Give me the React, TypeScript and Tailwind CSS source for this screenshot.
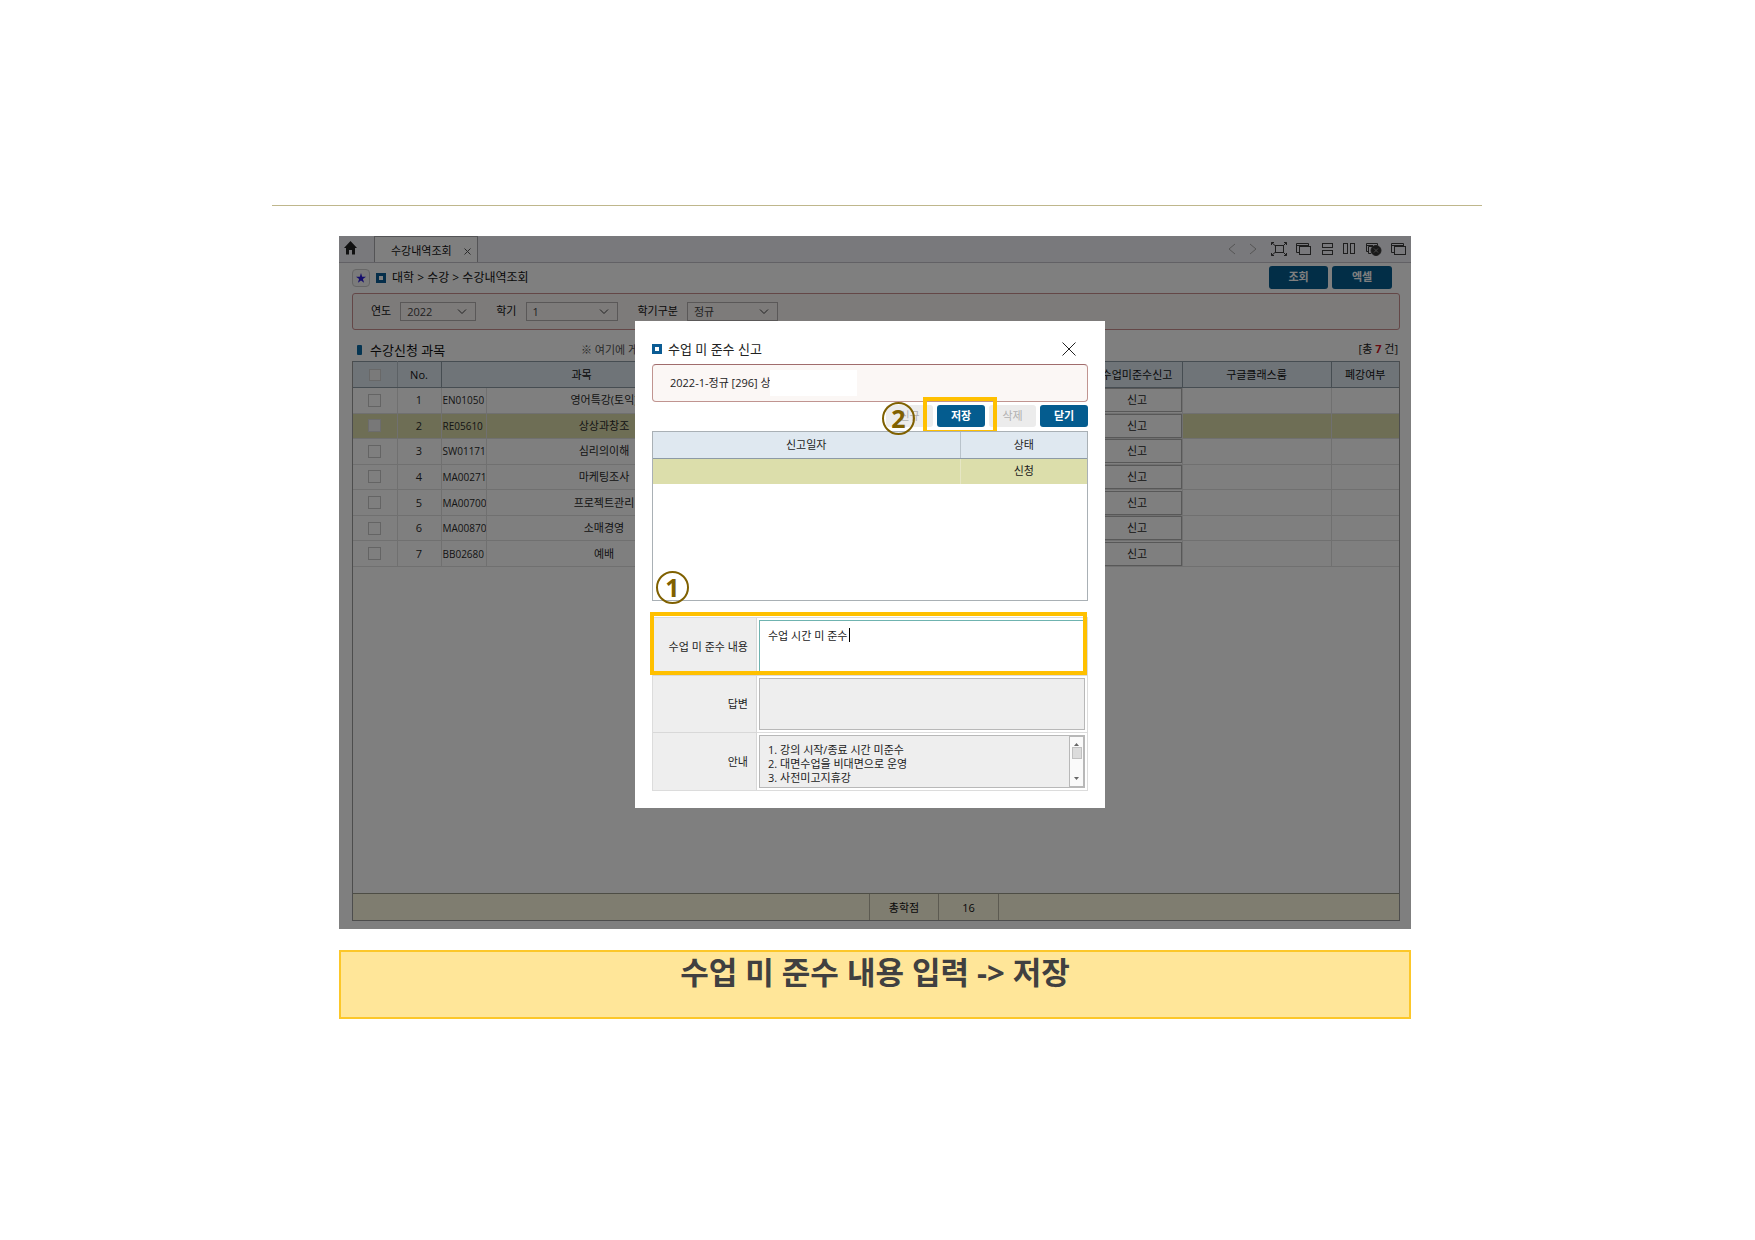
import React, { useState } from 'react';

interface Course {
    no: number;
    code: string;
    name: string;
}

const courses: Course[] = [
    { no: 1, code: 'EN01050', name: '영어특강(토익)' },
    { no: 2, code: 'RE05610', name: '상상과창조' },
    { no: 3, code: 'SW01171', name: '심리의이해' },
    { no: 4, code: 'MA00271', name: '마케팅조사' },
    { no: 5, code: 'MA00700', name: '프로젝트관리' },
    { no: 6, code: 'MA00870', name: '소매경영' },
    { no: 7, code: 'BB02680', name: '예배' },
];

const SquareMark: React.FC = () => (
    <span className="flex size-[10px] shrink-0 items-center justify-center bg-[#0b5c94]">
        <span className="size-1 bg-white" />
    </span>
);

interface FilterSelectProps {
    id: string;
    label: string;
    value: string;
    width: string; // Tailwind width class
}

const FilterSelect: React.FC<FilterSelectProps> = ({ id, label, value, width }) => (
    <div className="flex items-center gap-[9px]">
        <label htmlFor={id} className="text-[11px] text-[#111]">{label}</label>
        <div className={`relative ${width}`}>
            <select
                id={id}
                defaultValue={value}
                className="block h-[19px] w-full appearance-none border border-[#b4b0b0] bg-[#faf6f5] pl-[6px] text-[11px] leading-[17px] text-[#444]"
            >
                <option>{value}</option>
            </select>
            <svg
                className="pointer-events-none absolute right-[9px] top-[6px]"
                width="10"
                height="7"
                viewBox="0 0 10 7"
                fill="none"
                stroke="#444"
            >
                <path d="M1 1.5L5 5.5L9 1.5" />
            </svg>
        </div>
    </div>
);

const ToolbarIcons: React.FC = () => (
    <div className="flex items-center gap-[9px] pr-1 text-[#3c3c3c]">
        <svg width="10" height="14" viewBox="0 0 10 14" fill="none" stroke="#aaa"><path d="M7 2L1 7L7 12" /></svg>
        <svg className="mr-[3px]" width="12" height="14" viewBox="0 0 12 14" fill="none" stroke="#aaa"><path d="M3 2L9 7L3 12" /></svg>
        {/* Full screen */}
        <svg width="16" height="14" viewBox="0 0 16 14" fill="none" stroke="currentColor">
            <rect x="4.5" y="3.5" width="8" height="7" />
            <path d="M.5 3V.5H3M13 .5H15.5V3M15.5 11V13.5H13M3 13.5H.5V11M.5 .5L4 3.500M15.5 .5L12.500 3.500M.5 13.5L4 10.500M15.5 13.5L12.500 10.500" />
        </svg>
        {/* Cascade */}
        <svg width="16" height="14" viewBox="0 0 16 14" fill="none" stroke="currentColor">
            <path d="M3 10.5H.5V1.5H12.5V4M.5 3.5H12.5" />
            <rect x="3.5" y="4.5" width="11" height="8" />
        </svg>
        <svg width="13" height="14" viewBox="0 0 13 14" fill="none" stroke="currentColor">
            <rect x="1.5" y="1.5" width="10" height="4" />
            <rect x="1.5" y="8.5" width="10" height="4" />
        </svg>
        <svg width="13" height="14" viewBox="0 0 13 14" fill="none" stroke="currentColor">
            <rect x=".5" y="1.5" width="4" height="10" />
            <rect x="7.5" y="1.5" width="4" height="10" />
        </svg>
        {/* Close all */}
        <svg width="17" height="14" viewBox="0 0 17 14" fill="none" stroke="currentColor">
            <path d="M3.5 9.5H1.5V1.5H12.5V3.5M1.5 3.5H8M6 11.5H3.5V4.5H9" />
            <circle cx="11" cy="8.5" r="5" fill="#333" />
            <path d="M9 6.5L13 10.5M13 6.5L9 10.5" stroke="#999" />
        </svg>
        <svg width="16" height="14" viewBox="0 0 16 14" fill="none" stroke="currentColor">
            <path d="M3 10.5H.5V1.5H12.5V4M.5 3.5H12.5" />
            <rect x="3.5" y="4.5" width="11" height="8" />
        </svg>
    </div>
);

const CourseTable: React.FC = () => (
    <table className="h-[206px] w-full table-fixed border-collapse text-center text-[11px] leading-[14px] text-[#2a2a2a]">
        <colgroup>
            <col className="w-[44px]" />
            <col className="w-[44px]" />
            <col className="w-[45px]" />
            <col className="w-[236px]" />
            <col />
            <col className="w-[90px]" />
            <col className="w-[149px]" />
            <col className="w-[68px]" />
        </colgroup>
        <thead>
            <tr className="h-[26px] bg-[#dee8f1] text-[#111]">
                <th className="border border-[#8d9aa5] border-l-0 border-r-[#b9c3cb] p-0">
                    <input
                        type="checkbox"
                        aria-label="전체 선택"
                        className="mx-auto block size-[12px] appearance-none border border-[#d0d0d0] bg-[#f4f4f4]"
                    />
                </th>
                <th className="border border-[#8d9aa5] p-0 font-medium">No.</th>
                <th colSpan={2} className="border border-[#8d9aa5] p-0 font-normal">과목</th>
                <th className="border border-[#8d9aa5] p-0" />
                <th className="border border-[#8d9aa5] p-0 font-normal">수업미준수신고</th>
                <th className="border border-[#8d9aa5] p-0 font-normal">구글클래스룸</th>
                <th className="border border-r-0 border-[#8d9aa5] p-0 font-normal">폐강여부</th>
            </tr>
        </thead>
        <tbody>
            {courses.map((course) => (
                <tr key={course.no} className={`h-[25px] ${course.no === 2 ? 'bg-[#dcddab]' : 'bg-white'}`}>
                    <td className="border border-l-0 border-[#e0e0e0] p-0">
                        <input
                            type="checkbox"
                            aria-label={course.name}
                            className={`mx-auto block size-[13px] appearance-none border ${
                                course.no === 2 ? 'border-[#d8d8d8] bg-[#f0f0f0]' : 'border-[#c8c8c8] bg-white'
                            }`}
                        />
                    </td>
                    <td className="border border-[#e0e0e0] p-0">{course.no}</td>
                    <td className="overflow-hidden whitespace-nowrap border border-[#e0e0e0] p-0 pl-px text-left text-[10px]">
                        {course.code}
                    </td>
                    <td className="border border-[#e0e0e0] p-0">{course.name}</td>
                    <td className="border border-[#e0e0e0] p-0" />
                    <td className="border border-[#e0e0e0] p-0">
                        <button className="block h-[24px] w-full border border-[#b0b0b0] bg-white text-[11px]">신고</button>
                    </td>
                    <td className="border border-[#e0e0e0] p-0" />
                    <td className="border border-r-0 border-[#e0e0e0] p-0" />
                </tr>
            ))}
        </tbody>
    </table>
);

const StepNumber: React.FC<{ value: number; position: string }> = ({ value, position }) => (
    <span
        className={`absolute z-10 flex size-[33px] items-center justify-center rounded-full border-2 border-[#7f6000] text-[25px] font-bold leading-none text-[#7f6000] ${position}`}
    >
        {value}
    </span>
);

const ReportDialog: React.FC = () => {
    const [content, setContent] = useState('수업 시간 미 준수');

    return (
        <div role="dialog" aria-labelledby="report-title" className="w-[470px] bg-white px-[17px] pb-[17px] pt-[15px] text-[#222]">
            <div className="flex h-[28px] items-center justify-between pb-[3px] pr-3">
                <h2 id="report-title" className="flex items-center gap-[6px] text-[13px] leading-5">
                    <SquareMark />
                    수업 미 준수 신고
                </h2>
                <button aria-label="창 닫기">
                    <svg width="14" height="14" viewBox="0 0 14 14" stroke="#222"><path d="M.5 .5L13.5 13.5M13.5 .5L.5 13.5" /></svg>
                </button>
            </div>

            <div className="flex h-[38px] items-center rounded-sm border border-[#c09490] border-t-[#a06c6c] bg-[#fbf7f5] pl-[17px]">
                <p className="w-[100px] overflow-hidden whitespace-nowrap text-[11px] leading-4">2022-1-정규 [296] 상</p>
                <span className="h-[26px] w-[87px] bg-white" />
            </div>

            {/* Actions */}
            <div className="relative mt-[3px] flex justify-end gap-1 text-[11px] font-bold leading-[14px]">
                <StepNumber value={2} position="left-[230px] -top-[3px]" />
                <button className="h-[22px] w-[47px] rounded-[3px] bg-[#ececec] font-normal text-[#b0b0b0]">신규</button>
                <div className="relative">
                    <button className="h-[22px] w-[48px] rounded-[3px] bg-[#045c8f] text-white">저장</button>
                    <span className="absolute -left-[14px] -top-[8px] h-[37px] w-[74px] border-4 border-[#ffc000]" />
                </div>
                <button className="h-[22px] w-[47px] rounded-[3px] bg-[#ececec] font-normal text-[#b0b0b0]">삭제</button>
                <button className="h-[22px] w-[48px] rounded-[3px] bg-[#045c8f] text-white">닫기</button>
            </div>

            <div className="relative mt-1 h-[170px] border border-[#a9b0b5]">
                <table className="w-full table-fixed border-collapse text-center text-[11px] leading-[14px]">
                    <thead>
                        <tr className="h-[26px] bg-[#dfe8f0]">
                            <th className="border-b border-[#8d9aa5] p-0 font-normal">신고일자</th>
                            <th className="w-[127px] border-b border-l border-[#8d9aa5] border-l-[#b9c3cb] p-0 font-normal">상태</th>
                        </tr>
                    </thead>
                    <tbody>
                        <tr className="h-[26px] bg-[#dcdeab]">
                            <td className="p-0" />
                            <td className="border-l border-[#e6e6c4] p-0">신청</td>
                        </tr>
                    </tbody>
                </table>
                <StepNumber value={1} position="left-[3px] bottom-[-4px]" />
            </div>

            {/* Report form */}
            <div className="relative mt-4 grid grid-cols-[104px_1fr] border border-[#dcdcdc] text-[11px] leading-[14px]">
                <label htmlFor="content" className="flex h-[58px] items-center justify-end border-b border-r border-[#d8d8d8] bg-[#eee] pr-[8px]">
                    수업 미 준수 내용
                </label>
                <div className="border-b border-[#dcdcdc] p-[2px]">
                    <textarea
                        id="content"
                        value={content}
                        onChange={(e) => setContent(e.target.value)}
                        className="block h-[53px] w-full resize-none border border-[#6fb3b0] bg-white px-2 py-[8px] outline-none"
                    />
                </div>
                <label htmlFor="answer" className="flex h-[57px] items-center justify-end border-b border-r border-[#d8d8d8] bg-[#eee] pr-[8px]">
                    답변
                </label>
                <div className="border-b border-[#dcdcdc] p-[2px]">
                    <textarea id="answer" readOnly className="block h-[52px] w-full resize-none border border-[#b8b8b8] bg-[#eee] outline-none" />
                </div>
                <label htmlFor="guide" className="flex h-[57px] items-center justify-end border-r border-[#d8d8d8] bg-[#eee] pr-[8px]">
                    안내
                </label>
                <div className="p-[2px]">
                    <div className="flex h-[53px] border border-[#b8b8b8] bg-[#eee]">
                        <textarea
                            id="guide"
                            readOnly
                            value={'1. 강의 시작/종료 시간 미준수\n2. 대면수업을 비대면으로 운영\n3. 사전미고지휴강'}
                            className="block h-full flex-1 resize-none overflow-hidden bg-[#eee] px-2 pt-[7px] outline-none"
                        />
                        <div className="flex w-[15px] flex-col items-center justify-between border border-[#b8b8b8] bg-[#fafafa] py-[6px]">
                            <svg width="5" height="3" viewBox="0 0 5 3" fill="#666"><path d="M0 3L2.500 0L5 3Z" /></svg>
                            <span className="mb-[17px] h-[12px] w-[10px] border border-[#c0c0c0] bg-[#dcdcdc]" />
                            <svg width="5" height="3" viewBox="0 0 5 3" fill="#666"><path d="M0 0L2.500 3L5 0Z" /></svg>
                        </div>
                    </div>
                </div>
                <span className="pointer-events-none absolute -left-[3px] right-0 -top-[6px] h-[63px] border-4 border-[#ffc000]" />
                <span className="pointer-events-none absolute left-[196px] top-[10px] h-[14px] w-px bg-black" />
            </div>
        </div>
    );
};

const App: React.FC = () => {
    return (
        <main className="min-h-screen bg-white pb-10 pl-[272px] pr-[273px] pt-[205px] font-['Open_Sans','Noto_Sans_CJK_KR',sans-serif]">
            <hr className="border-t border-[#bfb78c]" />

            <div className="pl-[67px] pr-[71px] pt-[30px]">
                <div className="relative bg-white">
                    {/* Tabs */}
                    <div className="flex h-[27px] justify-between border-b border-[#c4c2ca] bg-[#f3f2f8]">
                        <div className="flex">
                            <a href="#home" aria-label="홈" className="flex w-[35px] items-center pb-[2px] pl-[5px]">
                                <svg width="13" height="14" viewBox="0 0 13 14" fill="#222">
                                    <path d="M6.500 0L13 7H11V13.500H8V9H5V13.500H2V7H0Z" />
                                </svg>
                            </a>
                            <div className="flex w-[104px] items-center justify-between border border-b-0 border-[#a8a8ac] bg-white pl-4 pr-[6px] pt-[3px] text-[11px] text-[#111]">
                                수강내역조회
                                <button aria-label="탭 닫기">
                                    <svg width="7" height="7" viewBox="0 0 7 7" stroke="#555"><path d="M.5 .5L6.500 6.500M6.500 .5L.5 6.500" /></svg>
                                </button>
                            </div>
                        </div>
                        <ToolbarIcons />
                    </div>

                    <div className="pb-[8px] pl-[13px] pr-[11px]">
                        {/* Breadcrumb */}
                        <div className="flex h-[30px] items-center justify-between pr-2">
                            <div className="flex items-center gap-[6px] text-[12px] leading-4 text-[#111]">
                                <button aria-label="즐겨찾기" className="flex size-[18px] items-center justify-center rounded-sm border border-[#ccc] bg-[#f6f6f6]">
                                    <svg width="10" height="10" viewBox="0 0 10 10" fill="#2a1cd8">
                                        <path d="M5 0L6.200 3.700H10L6.900 6L8.100 9.700L5 7.400L1.900 9.700L3.100 6L0 3.700H3.800Z" />
                                    </svg>
                                </button>
                                <SquareMark />
                                <span>대학 &gt; 수강 &gt; 수강내역조회</span>
                            </div>
                            <div className="flex gap-1 pb-px text-[11px] font-bold text-white">
                                <button className="h-[23px] w-[59px] rounded-[3px] bg-[#045c8f]">조회</button>
                                <button className="h-[23px] w-[60px] rounded-[3px] bg-[#045c8f]">엑셀</button>
                            </div>
                        </div>

                        {/* Filters */}
                        <div className="flex h-[37px] items-center gap-5 rounded-[3px] border border-[#c98f8f] bg-[#fbf6f5] pb-px pl-[18px]">
                            <FilterSelect id="year" label="연도" value="2022" width="w-[76px]" />
                            <FilterSelect id="term" label="학기" value="1" width="w-[92px]" />
                            <FilterSelect id="kind" label="학기구분" value="정규" width="w-[91px]" />
                        </div>

                        <div className="flex h-[31px] items-center pr-[2px] pt-[8px] text-[#222]">
                            <span className="ml-[5px] h-[10px] w-[5px] rounded-[1px] bg-[#0b6aa5]" />
                            <h1 className="ml-2 w-[211px] text-[13px] leading-4 text-[#111]">수강신청 과목</h1>
                            <p className="pt-[2px] text-[11px] text-[#555]">※ 여기에 게</p>
                            <p className="ml-auto text-[11px]">
                                [총 <span className="font-bold text-[#d01020]">7</span> 건]
                            </p>
                        </div>

                        {/* Course grid */}
                        <div className="border-x border-b border-[#9a9a9a]">
                            <div className="min-h-[532px]">
                                <CourseTable />
                            </div>
                            <div className="flex h-[27px] border-t border-[#9a9a8a] bg-[#fefae1] text-center text-[11px] leading-[27px] text-[#111]">
                                <span className="w-[516px]" />
                                <span className="w-[70px] border-x border-[#b8b5a2]">총학점</span>
                                <span className="w-[60px] border-r border-[#b8b5a2] font-medium">16</span>
                            </div>
                        </div>
                    </div>

                    <div className="absolute inset-0 bg-black/50 pl-[296px] pt-[85px]">
                        <ReportDialog />
                    </div>
                </div>

                <div className="mt-[21px] h-[69px] border-2 border-[#fcc729] bg-[#ffe699] text-center text-[31px] font-bold leading-[40px] text-[#404040]">
                    수업 미 준수 내용 입력 -&gt; 저장
                </div>
            </div>
        </main>
    );
};

export default App;
